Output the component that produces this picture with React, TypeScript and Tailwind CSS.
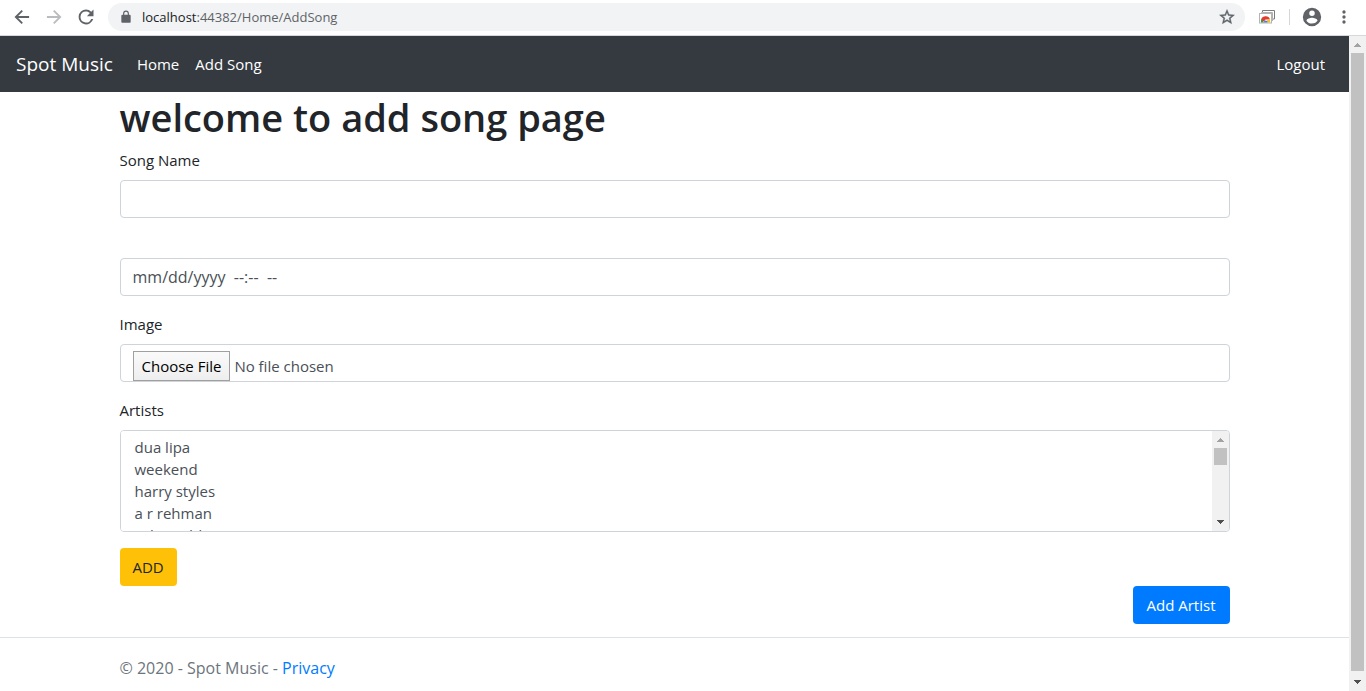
import React from "react";

const control =
  "block w-full rounded border border-[#ced4da] bg-white px-3 text-[#495057] placeholder:text-[#495057] outline-none focus:border-[#80bdff]";

const artists = ["dua lipa", "weekend", "harry styles", "a r rehman", "selena dd", "ed sheeran", "adele", "sia", "drake", "coldplay", "eminem", "rihanna", "shakira", "usher", "pink", "lorde", "halsey", "khalid", "zayn", "kygo"];

function Arrow({ up = false, dim = false }: { up?: boolean; dim?: boolean }) {
  return (
    <svg className="block h-[17px] w-full shrink-0" viewBox="0 0 17 17" shapeRendering="crispEdges" fill={dim ? "#a3a3a3" : "#505050"} aria-hidden="true">
      {up ? <path d="M5 11h7v-1h-1v-1h-1V8H9V7H8v1H7v1H6v1H5z" /> : <path d="M5 6h7v1h-1v1h-1v1H9v1H8V9H7V8H6V7H5z" />}
    </svg>
  );
}

function BrowserBar() {
  return (
    <header className="flex h-9 shrink-0 items-center border-b border-[#d5d7da] bg-white px-3 pb-px text-[#5f6368]">
      <button aria-label="Back" className="flex w-8 shrink-0">
        <svg className="h-5 w-5" viewBox="0 0 24 24" fill="currentColor"><path d="M20.500 10.800H7.400l5.700-5.700L11.500 3.500 3 12l8.500 8.500 1.600-1.600-5.700-5.700h13.100z" /></svg>
      </button>
      <button aria-label="Forward" className="flex w-8 shrink-0 text-[#babcbe]">
        <svg className="h-5 w-5" viewBox="0 0 24 24" fill="currentColor"><path d="M3.500 10.800h13.100l-5.700-5.700 1.600-1.600L21 12l-8.500 8.500-1.600-1.600 5.700-5.700H3.500z" /></svg>
      </button>
      <button aria-label="Reload" className="flex w-8 shrink-0">
        <svg className="h-5 w-5" viewBox="0 0 24 24" fill="currentColor"><path d="M18.300 5.700A8.900 8.900 0 0 0 12 3.100a8.900 8.900 0 1 0 8.600 11.200h-2.400A6.600 6.600 0 1 1 12 5.400c1.800 0 3.500.8 4.700 1.900L13.100 11H21V3z" /></svg>
      </button>
      <div className="flex h-7 min-w-0 flex-1 items-center rounded-full bg-[#f1f3f4] pr-2 pl-[11px]">
        <svg className="h-3.5 w-3.5 shrink-0" viewBox="0 0 24 24" fill="currentColor" aria-hidden="true"><path d="M18 8h-1V6A5 5 0 0 0 7 6v2H6a2 2 0 0 0-2 2v10c0 1.100.9 2 2 2h12a2 2 0 0 0 2-2V10a2 2 0 0 0-2-2zM9 6a3 3 0 0 1 6 0v2H9z" /></svg>
        <div className="ml-[9px] min-w-0 flex-1 truncate text-[13px]">
          <span className="text-[#202124]">localhost</span>:44382/Home/AddSong
        </div>
        <button aria-label="Bookmark">
          <svg className="h-[18px] w-5" viewBox="0 0 24 24" fill="currentColor" stroke="currentColor" strokeWidth=".5"><path d="M22 9.240l-7.190-.62L12 2 9.190 8.630 2 9.240l5.460 4.730L5.820 21 12 17.270 18.180 21l-1.630-7.030zM12 15.400l-3.760 2.270 1-4.280-3.320-2.880 4.380-.38L12 6.100l1.710 4.040 4.380.38-3.320 2.880 1 4.280z" /></svg>
        </button>
      </div>
      <button aria-label="Extension" className="ml-3.5">
        <svg className="h-4 w-4" viewBox="0 0 16 16" fill="none" aria-hidden="true">
          <path d="M3.500 4V1.500h12v8.500H14" stroke="#7c7c7c" /><path d="M2.500 5V3.500h11V12" stroke="#b0b0b0" />
          <rect x=".5" y="4.500" width="12" height="9.500" fill="#fff" stroke="#b4b4b4" />
          <path d="M2 11.500a4.600 4.600 0 0 1 9-1H6.500L5 12.500z" fill="#e33b2e" />
          <path d="M2 13.500a5 5 0 0 1 .5-3.500L5 13.500z" fill="#2f9e4f" /><path d="M8 10.500h3l.3 3H8z" fill="#f5c12c" /><path d="M4.800 13.500a1.900 1.900 0 1 1 3.800 0z" fill="#3f7fe8" />
        </svg>
      </button>
      <span className="ml-3.5 h-4 w-px bg-[#d5d7da]" />
      <button aria-label="Profile" className="ml-[11px]">
        <svg className="h-[22px] w-[22px]" viewBox="0 0 24 24" fill="currentColor"><path d="M12 2a10 10 0 1 0 0 20 10 10 0 0 0 0-20zm0 3a3 3 0 1 1 0 6 3 3 0 0 1 0-6zm0 14.200a7.200 7.200 0 0 1-6-3.220c.03-1.990 4-3.080 6-3.080s5.970 1.090 6 3.080a7.200 7.200 0 0 1-6 3.220z" /></svg>
      </button>
      <button aria-label="Menu" className="ml-[11px]">
        <svg className="h-5 w-5" viewBox="0 0 24 24" fill="currentColor"><path d="M12 8a2 2 0 1 0 0-4 2 2 0 0 0 0 4zm0 2a2 2 0 1 0 0 4 2 2 0 0 0 0-4zm0 6a2 2 0 1 0 0 4 2 2 0 0 0 0-4z" /></svg>
      </button>
    </header>
  );
}

export default function App() {
  return (
    <div className="flex h-screen flex-col bg-white font-['Open_Sans','Noto_Sans',sans-serif] text-[15px] leading-6 text-[#212529]">
      <BrowserBar />
      <div className="flex min-h-0 flex-1">
        <div className="min-w-0 flex-1 overflow-y-auto [scrollbar-width:none]">
          <nav className="flex h-14 items-center bg-[#343a40] px-4 text-white">
            <a href="#top" className="mr-4 text-[19px]">Spot Music</a>
            <a href="#home" className="px-2">Home</a>
            <a href="#add" className="px-2">Add Song</a>
            <a href="#logout" className="ml-auto px-2">Logout</a>
          </nav>
          <main className="mx-auto max-w-[1140px] px-[15px]">
            <h1 className="mb-1.5 text-[38px] leading-[50px] font-semibold">welcome to add song page</h1>
            <form onSubmit={(e) => e.preventDefault()}>
              <label htmlFor="song" className="mb-2 block">Song Name</label>
              <input id="song" type="text" className={`${control} h-[38px]`} />
              <input aria-label="Release date" type="text" placeholder={"mm/dd/yyyy\u00a0\u00a0--:--\u00a0\u00a0--"} className={`${control} mt-10 h-[38px] text-base`} />
              <label htmlFor="image" className="mt-4 mb-2 block">Image</label>
              <input
                id="image"
                type="file"
                className={`${control} h-[38px] overflow-hidden pt-1.5 file:mr-1 file:h-[30px] file:border file:border-solid file:border-[#a0a0a0] file:bg-linear-to-b file:from-[#fafafa] file:to-[#eeeeee] file:px-2 file:text-black`}
              />
              <label htmlFor="artists" className="mt-4 mb-2 block">Artists</label>
              <div className="flex h-[102px] overflow-hidden rounded border border-[#ced4da]">
                <select id="artists" multiple size={4} className="h-full min-w-0 flex-1 overflow-y-auto bg-white px-3 pt-1.5 text-[#495057] outline-none [scrollbar-width:none]">
                  {artists.map((a) => (
                    <option key={a} className="h-[22px] min-h-0 px-0.5 py-0 leading-[22px]">{a}</option>
                  ))}
                </select>
                <div className="flex w-[17px] shrink-0 flex-col bg-[#f1f1f1]">
                  <Arrow up dim />
                  <div className="mx-0.5 h-[17px] bg-[#c1c1c1]" />
                  <div className="flex-1" />
                  <Arrow />
                </div>
              </div>
              <button type="submit" className="mt-4 block h-[38px] rounded bg-[#ffc107] px-[13px]">ADD</button>
            </form>
            <div className="flex justify-end">
              <a href="#artist" className="flex h-[38px] items-center rounded bg-[#007bff] px-3.5 text-white">Add Artist</a>
            </div>
          </main>
          <footer className="mt-[13px] border-t border-[#dee2e6] text-base leading-[60px] text-[#6c757d]">
            <div className="mx-auto max-w-[1140px] px-[15px]">
              © 2020 - Spot Music - <a href="#privacy" className="text-[#007bff]">Privacy</a>
            </div>
          </footer>
        </div>
        <div className="flex w-[17px] shrink-0 flex-col bg-[#f1f1f1]">
          <Arrow up dim />
          <div className="mx-0.5 flex-1 bg-[#c1c1c1]" />
          <div className="h-[3px]" />
          <Arrow />
        </div>
      </div>
    </div>
  );
}
